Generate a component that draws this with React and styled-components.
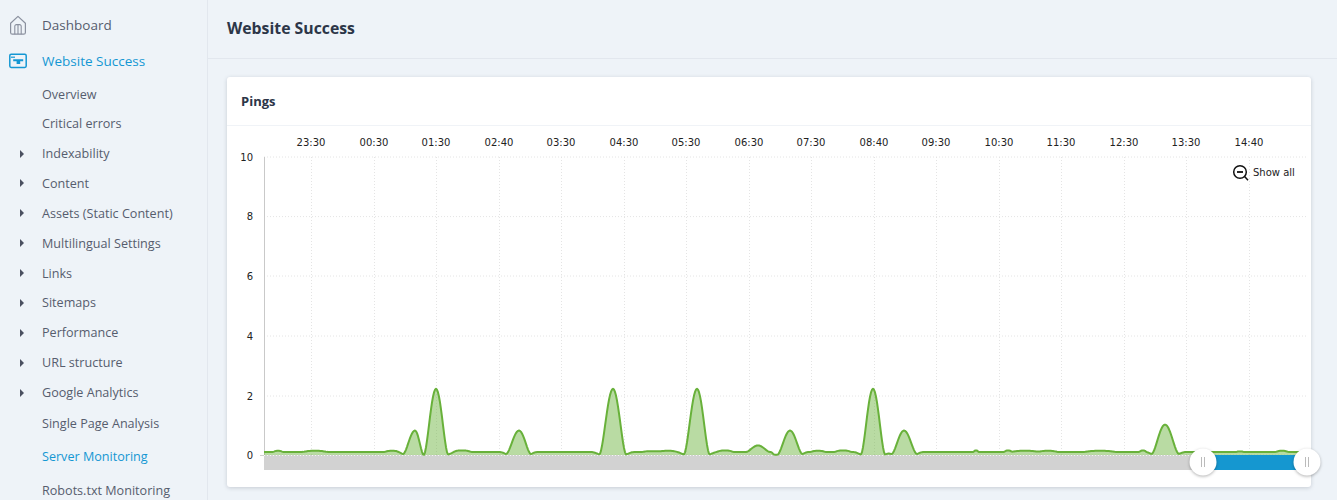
import React from "react";
import styled, { createGlobalStyle } from "styled-components";

const Global = createGlobalStyle`
  html, body { margin: 0; padding: 0; height: 500px; overflow: hidden; background: #eef3f8; }
  #root { height: 500px; }
`;

const Page = styled.div`
  display: flex;
  height: 500px;
  overflow: hidden;
  background: #eef3f8;
  font-family: "Open Sans", "Noto Sans", sans-serif;
`;

const Sidebar = styled.nav`
  flex: 0 0 207px;
  height: 500px;
  overflow: hidden;
  border-right: 1px solid #e2e7ee;
  padding-top: 7px;
  box-sizing: content-box;
`;

const TopRow = styled.div`
  display: flex;
  align-items: center;
  height: ${p => p.$h}px;
  padding-left: 8px;
  gap: 14px;
  font-size: 13.5px;
  color: ${p => (p.$active ? "#1497d3" : "#565d6e")};
`;

const IconSlot = styled.span`
  flex: 0 0 20px;
  display: flex;
  align-items: center;
  justify-content: center;
`;

const SubRow = styled.div`
  display: flex;
  align-items: center;
  height: ${p => p.$h || 29.9}px;
  padding-left: 20px;
  font-size: 12.6px;
  color: ${p => (p.$active ? "#1497d3" : "#565d6e")};
  white-space: nowrap;
`;

const Caret = styled.span`
  flex: 0 0 22px;
  display: flex;
  align-items: center;
  &::before {
    content: "";
    display: ${p => (p.$hidden ? "none" : "block")};
    border-left: 4px solid #4a5060;
    border-top: 4px solid transparent;
    border-bottom: 4px solid transparent;
  }
`;

const Main = styled.main`
  flex: 1;
  min-width: 0;
  display: flex;
  flex-direction: column;
`;

const Header = styled.header`
  height: 59px;
  flex: 0 0 59px;
  box-sizing: border-box;
  display: flex;
  align-items: center;
  padding: 0 0 2px 19px;
  border-bottom: 1px solid #e2e7ee;
  font-size: 15.8px;
  font-weight: 700;
  color: #2c3648;
`;

const Content = styled.div`
  padding: 18px 26px 0 19px;
`;

const Card = styled.section`
  background: #fff;
  height: 410px;
  border-radius: 3px;
  box-shadow: 0 1px 4px rgba(40, 50, 70, 0.2);
  display: flex;
  flex-direction: column;
`;

const CardTitle = styled.h2`
  margin: 0;
  flex: 0 0 49px;
  box-sizing: border-box;
  display: flex;
  align-items: center;
  padding-left: 14px;
  border-bottom: 1px solid #f0f3f7;
  font-size: 13px;
  font-weight: 700;
  color: #2c3648;
`;

const ChartSvg = styled.svg`
  display: block;
  overflow: visible;
  flex: 1;
  text {
    font-family: "DejaVu Sans", sans-serif;
    font-size: 10px;
    fill: #222;
  }
`;

const HomeIcon = () => (
  <svg width="20" height="22" viewBox="0 0 20 22" fill="none" stroke="#8a909e" strokeWidth="1.2" strokeLinejoin="round">
    <path d="M2.6 9.2 10 2.4l7.4 6.8v9.2a1.8 1.8 0 0 1-1.8 1.8H4.4a1.8 1.8 0 0 1-1.8-1.8z" />
    <path d="M6.8 20.2v-8a1.6 1.6 0 0 1 1.6-1.6h3.2a1.6 1.6 0 0 1 1.6 1.6v8M10 11v9" strokeWidth="1.1" />
  </svg>
);

const SuccessIcon = () => (
  <svg width="18" height="16" viewBox="0 0 18 16" fill="none">
    <rect x="0.8" y="1.3" width="16.4" height="13.2" rx="1.4" stroke="#1497d3" strokeWidth="1.5" />
    <path d="M2 4.2h4" stroke="#1497d3" strokeWidth="1.2" />
    <path d="M4.2 6.2h10v2.1h-3v2.6H7.6V8.3H4.2z" fill="#1497d3" />
  </svg>
);

const ticks = ["23:30","00:30","01:30","02:40","03:30","04:30","05:30","06:30","07:30","08:40","09:30","10:30","11:30","12:30","13:30","14:40"];
const tickX = [311,374,436,499,561,624,686,749,811,874,936,999,1061,1124,1186,1249];
const yTicks = [[10,157],[8,216.6],[6,276],[4,336],[2,396],[0,455]];

/* centre, height, left half-width, right half-width */
const peaks = [
  [415, .82, 12, 8.5], [436, 2.22, 12, 12], [519, .82, 13, 12], [613, 2.22, 13.5, 13],
  [697, 2.22, 13, 12.5], [758, .22, 12, 12], [790, .82, 12.5, 12.5], [873, 2.22, 12, 12],
  [904, .82, 12.5, 13], [1165, 1.02, 13.5, 14],
];
const bumps = [[278,4,.04],[315,10,.04],[392,6,.04],[462,8,.05],[668,8,.04],[652,8,.03],[725,7,.05],[776,3.5,-.09],[818,6,.04],[843,7,.05],[976,2,.05],[1008,3,.05],[1025,12,.04],[1048,8,.04],[1100,13,.04],[1143,3,.05],[1240,3,.02],[1282,5,.04]];

function value(x) {
  let base = 0.1;
  for (const [c, w, a] of bumps) base += a * Math.exp(-Math.pow((x - c) / w, 4));
  let mask = 1, sum = 0;
  for (const [c, h, l, r] of peaks) {
    const w = x < c ? l : r;
    const tall = h > 2 ? 3.5 : 2;
    if (h > 0.5) mask *= 1 - Math.exp(-Math.pow((x - c) / (w + tall), 6));
    if (Math.abs(x - c) < w) sum += h * Math.pow(Math.cos((Math.PI * (x - c)) / (2 * w)), 1.6);
  }
  return base * mask + sum;
}

const pts = [];
for (let x = 264; x <= 1300; x += 1) pts.push([x, 455 - value(x) * 29.8]);
const line = "M" + pts.map(([x, y]) => `${x} ${y.toFixed(2)}`).join("L");
const area = `${line}L1300 455L264 455Z`;

const Chart = () => (
  <ChartSvg viewBox="227 126 1084 361" width="1084" height="361">
    {yTicks.map(([v, y]) => (
      <g key={v}>
        <line x1="264" x2="1306" y1={y} y2={y} stroke="#e4e4e4" strokeDasharray="1 2" />
        <text x="253" y={y + 3.5} textAnchor="end">{v}</text>
      </g>
    ))}
    {tickX.map((x, i) => (
      <g key={x}>
        <line x1={x + 0.5} x2={x + 0.5} y1="157" y2="455" stroke="#e4e4e4" strokeDasharray="1 2" />
        <text x={x} y="146" textAnchor="middle">{ticks[i]}</text>
      </g>
    ))}
    <line x1="264.5" x2="264.5" y1="157" y2="455" stroke="#c9c9c9" />
    <line x1="260" x2="264" y1="455.5" y2="455.5" stroke="#cfcfcf" />

    <rect x="264" y="455" width="940" height="15" fill="#d2d2d2" />
    <rect x="1203" y="455" width="103" height="15" fill="#1597d0" />
    <line x1="264" x2="1203" y1="455.5" y2="455.5" stroke="#fff" strokeDasharray="1 2" opacity="0.8" />

    <path d={area} fill="#6cb33f" fillOpacity="0.48" />
    <path d={line} fill="none" stroke="#68b13a" strokeWidth="2" strokeLinejoin="round" />

    <g fill="none" stroke="#111" strokeWidth="1.5">
      <circle cx="1240" cy="172" r="6.3" />
      <path d="M1237 172h6" strokeWidth="1.8" />
      <path d="M1244.6 176.6l3.4 3.6" />
    </g>
    <text x="1253" y="176">Show all</text>

    {[1203, 1307].map(x => (
      <g key={x}>
        <circle cx={x} cy="462" r="13.5" fill="#fff" style={{ filter: "drop-shadow(0 1px 1.5px rgba(0,0,0,.3))" }} />
        <path d={`M${x - 1.5} 457v10M${x + 1.5} 457v10`} stroke="#bbb" strokeWidth="1" />
      </g>
    ))}
  </ChartSvg>
);

const subs = [
  ["Overview", false, 30],
  ["Critical errors", false, 29.6],
  ["Indexability", true],
  ["Content", true],
  ["Assets (Static Content)", true],
  ["Multilingual Settings", true],
  ["Links", true],
  ["Sitemaps", true],
  ["Performance", true],
  ["URL structure", true],
  ["Google Analytics", true],
  ["Single Page Analysis", false, 32],
  ["Server Monitoring", false, 34, true],
  ["Robots.txt Monitoring", false, 33],
];

export default function App() {
  return (
    <Page>
      <Global />
      <Sidebar>
        <TopRow $h={36}><IconSlot><HomeIcon /></IconSlot>Dashboard</TopRow>
        <TopRow $h={36} $active><IconSlot><SuccessIcon /></IconSlot>Website Success</TopRow>
        {subs.map(([label, caret, h, active]) => (
          <SubRow key={label} $h={h} $active={active}>
            <Caret $hidden={!caret} />
            {label}
          </SubRow>
        ))}
      </Sidebar>
      <Main>
        <Header>Website Success</Header>
        <Content>
          <Card>
            <CardTitle>Pings</CardTitle>
            <Chart />
          </Card>
        </Content>
      </Main>
    </Page>
  );
}
